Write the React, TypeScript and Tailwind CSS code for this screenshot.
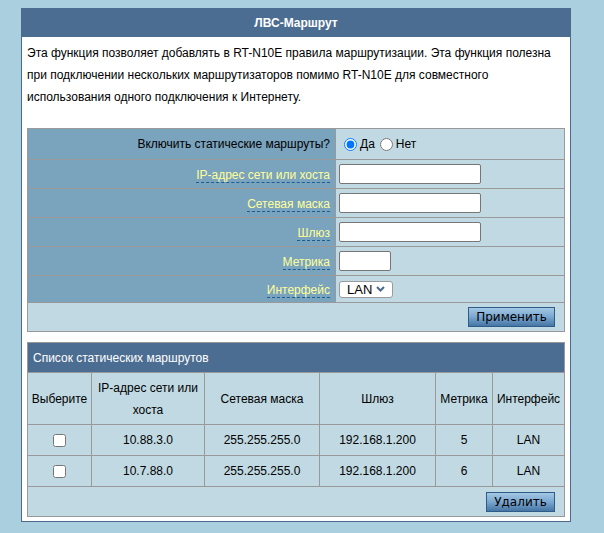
import React from "react";

function Hint({ children }: { children: React.ReactNode }) {
  return (
    <span className="inline-block translate-y-[1px] border-b border-dashed border-[#1a5e92] leading-[14px] text-[#ffff99]">
      {children}
    </span>
  );
}

function Btn({ children, w }: { children: React.ReactNode; w: string }) {
  return (
    <button
      type="button"
      className={`${w} h-[20px] border border-[#2d5b8a] bg-gradient-to-b from-[#a3c8e4] via-[#7aa6cf] to-[#4676a5] font-['DejaVu_Sans',Verdana,sans-serif] text-[12px] leading-[18px] text-black`}
    >
      {children}
    </button>
  );
}

const labelCell = "bg-[#7aa3bd] flex items-center justify-end pr-[5px]";
const valueCell = "bg-[#c0d9e3] flex items-center pl-[3px]";

function TextInput({ w }: { w: string }) {
  return (
    <input
      type="text"
      className={`${w} h-[20px] rounded-[2px] border border-[#767676] bg-white px-[2px] text-[13px]`}
    />
  );
}

const routes = [
  { ip: "10.88.3.0", mask: "255.255.255.0", gw: "192.168.1.200", metric: "5", iface: "LAN" },
  { ip: "10.7.88.0", mask: "255.255.255.0", gw: "192.168.1.200", metric: "6", iface: "LAN" },
];

export default function App() {
  return (
    <div className="h-[533px] w-full bg-[#aad0df] pl-[21px] pt-[8px] font-['Liberation_Sans',Arial,sans-serif] text-[12px] text-black">
      <div className="w-[550px] border-x border-b border-[#4d6a8e] bg-white pb-[4px]">
        <div className="flex h-[29px] items-center justify-center bg-[#4c6d92] text-[12px] font-bold text-white">
          ЛВС-Маршрут
        </div>
        <div className="px-[5px]">
          <p className="pt-[5px] text-[12px] leading-[22px]">
            Эта функция позволяет добавлять в RT-N10E правила маршрутизации. Эта функция полезна при
            подключении нескольких маршрутизаторов помимо RT-N10E для совместного использования одного
            подключения к Интернету.
          </p>

          <div className="mt-[20px] grid grid-cols-[307px_228px] gap-px bg-[#999999] p-px">
            <div className={`${labelCell} h-[30px]`}>Включить статические маршруты?</div>
            <div className={`${valueCell} h-[30px]`}>
              <input type="radio" name="sr" defaultChecked className="ml-[5px] mr-[3px] h-[13px] w-[13px]" />
              <span>Да</span>
              <input type="radio" name="sr" className="ml-[5px] mr-[3px] h-[13px] w-[13px]" />
              <span>Нет</span>
            </div>

            <div className={`${labelCell} h-[28px]`}>
              <Hint>IP-адрес сети или хоста</Hint>
            </div>
            <div className={`${valueCell} h-[28px]`}>
              <TextInput w="w-[142px]" />
            </div>

            <div className={`${labelCell} h-[28px]`}>
              <Hint>Сетевая маска</Hint>
            </div>
            <div className={`${valueCell} h-[28px]`}>
              <TextInput w="w-[142px]" />
            </div>

            <div className={`${labelCell} h-[28px]`}>
              <Hint>Шлюз</Hint>
            </div>
            <div className={`${valueCell} h-[28px]`}>
              <TextInput w="w-[142px]" />
            </div>

            <div className={`${labelCell} h-[28px]`}>
              <Hint>Метрика</Hint>
            </div>
            <div className={`${valueCell} h-[28px]`}>
              <TextInput w="w-[52px]" />
            </div>

            <div className={`${labelCell} h-[26px]`}>
              <Hint>Интерфейс</Hint>
            </div>
            <div className={`${valueCell} h-[26px]`}>
              <div className="flex h-[17px] w-[54px] items-center justify-between rounded-[3px] border border-[#9a9a9a] bg-white pl-[7px] pr-[7px] text-[13px]">
                <span className="leading-[15px]">LAN</span>
                <svg width="9" height="6" viewBox="0 0 9 6" fill="none">
                  <path d="M1 1l3.5 3.5L8 1" stroke="#4a6a88" strokeWidth="2" />
                </svg>
              </div>
            </div>

            <div className="col-span-2 flex h-[28px] items-center justify-end bg-[#c0d9e3] pr-[9px]">
              <Btn w="w-[87px]">Применить</Btn>
            </div>
          </div>

          <div className="mt-[10px] grid grid-cols-[63px_112px_114px_115px_56px_71px] gap-px bg-[#999999] p-px">
            <div className="col-span-6 flex h-[29px] items-center bg-[#4c6d92] pl-[5px] text-white">
              Список статических маршрутов
            </div>

            {["Выберите", "IP-адрес сети или хоста", "Сетевая маска", "Шлюз", "Метрика", "Интерфейс"].map(
              (h) => (
                <div
                  key={h}
                  className="flex h-[51px] items-center justify-center bg-[#c0d9e3] px-[2px] text-center leading-[22px]"
                >
                  {h}
                </div>
              )
            )}

            {routes.map((r, i) => (
              <React.Fragment key={i}>
                <div className="flex h-[30px] items-center justify-center bg-[#c0d9e3]">
                  <input type="checkbox" className="h-[13px] w-[13px]" />
                </div>
                <div className="flex h-[30px] items-center justify-center bg-[#c0d9e3]">{r.ip}</div>
                <div className="flex h-[30px] items-center justify-center bg-[#c0d9e3]">{r.mask}</div>
                <div className="flex h-[30px] items-center justify-center bg-[#c0d9e3]">{r.gw}</div>
                <div className="flex h-[30px] items-center justify-center bg-[#c0d9e3]">{r.metric}</div>
                <div className="flex h-[30px] items-center justify-center bg-[#c0d9e3]">{r.iface}</div>
              </React.Fragment>
            ))}

            <div className="col-span-6 flex h-[29px] items-center justify-end bg-[#c0d9e3] pr-[9px]">
              <Btn w="w-[69px]">Удалить</Btn>
            </div>
          </div>
        </div>
      </div>
    </div>
  );
}
